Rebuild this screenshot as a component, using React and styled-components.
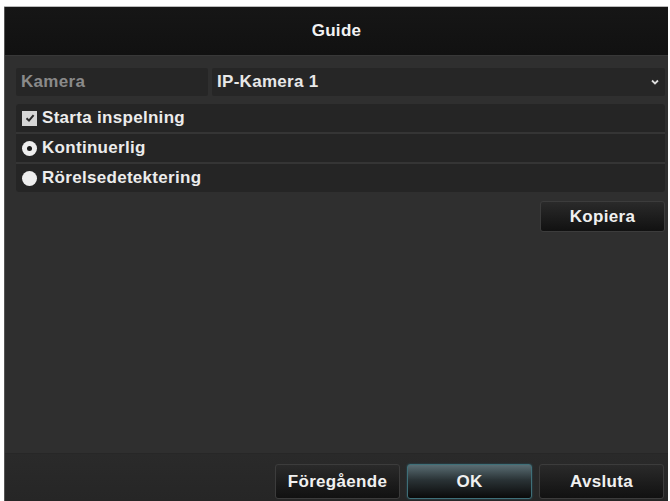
import React, { useState } from "react";
import styled, { createGlobalStyle } from "styled-components";

const GlobalStyle = createGlobalStyle`
  html, body {
    margin: 0;
    padding: 0;
    background: #ffffff;
    font-family: "Liberation Sans", Arial, sans-serif;
  }
  #root {
    height: 501px;
    overflow: hidden;
  }
`;

const Page = styled.div`
  padding: 7px 2px 0 4px;
  height: 501px;
  box-sizing: border-box;
`;

const Dialog = styled.div`
  height: 100%;
  display: flex;
  flex-direction: column;
  background: #2f2f2f;
  border-left: 1px solid #555;
  box-shadow: 0 -1px 0 #bbb;
`;

const TitleBar = styled.div`
  height: 48px;
  flex-shrink: 0;
  display: flex;
  align-items: center;
  justify-content: center;
  background: linear-gradient(#161616, #111111);
  color: #f2f2f2;
  font-weight: bold;
  font-size: 17px;
  letter-spacing: 0.3px;
  border-bottom: 1px solid #383838;
`;

const Body = styled.div`
  flex: 1;
  display: flex;
  flex-direction: column;
  padding: 12px 3px 0 11px;
`;

const FieldRow = styled.div`
  display: flex;
  gap: 4px;
  height: 28px;
`;

const Cell = styled.div`
  display: flex;
  align-items: center;
  background: #262626;
  border-radius: 2px;
  padding: 0 5px;
  font-size: 17px;
  font-weight: bold;
  letter-spacing: 0.3px;
  color: ${({ muted }) => (muted ? "#8a8a8a" : "#e8e8e8")};
  width: ${({ w }) => (w ? `${w}px` : "auto")};
  flex: ${({ w }) => (w ? "none" : 1)};
  box-sizing: border-box;
`;

const Caret = styled.svg`
  margin-left: auto;
  margin-right: 1px;
`;

const OptionGroup = styled.div`
  margin-top: 8px;
  display: flex;
  flex-direction: column;
  border-radius: 3px;
  overflow: hidden;
  background: #353535;
  gap: 2px;
`;

const OptionRow = styled.div`
  display: flex;
  align-items: center;
  gap: 5px;
  height: 28px;
  padding: 0 5px 0 6px;
  background: #252525;
  color: #ececec;
  font-size: 17px;
  font-weight: bold;
  letter-spacing: 0.3px;
`;

const Box = styled.span`
  width: 15px;
  height: 15px;
  background: #d6d6d6;
  display: flex;
  align-items: center;
  justify-content: center;
  flex-shrink: 0;
`;

const Radio = styled.span`
  width: 15px;
  height: 15px;
  border-radius: 50%;
  background: #eeeeee;
  display: flex;
  align-items: center;
  justify-content: center;
  flex-shrink: 0;
  &::after {
    content: "";
    width: 5px;
    height: 5px;
    border-radius: 50%;
    background: ${({ on }) => (on ? "#1b1b1b" : "transparent")};
  }
`;

const CopyRow = styled.div`
  display: flex;
  justify-content: flex-end;
  margin-top: 9px;
`;

const Button = styled.button`
  width: 125px;
  height: ${({ tall }) => (tall ? 35 : 31)}px;
  border-radius: 3px;
  border: 1px solid ${({ primary }) => (primary ? "#3f6f78" : "#3c3c3c")};
  background: ${({ primary }) =>
    primary
      ? "linear-gradient(#5a6d73 0%, #2a3336 45%, #0a0a0a 100%)"
      : "linear-gradient(#2a2a2a, #111111)"};
  color: #f0f0f0;
  font-family: "Liberation Sans", Arial, sans-serif;
  font-weight: bold;
  font-size: 17px;
  letter-spacing: 0.3px;
  cursor: pointer;
  box-shadow: ${({ primary }) => (primary ? "0 0 2px #2d5a66" : "none")};
`;

const Footer = styled.div`
  flex-shrink: 0;
  height: 48px;
  box-sizing: border-box;
  display: flex;
  align-items: flex-start;
  justify-content: flex-end;
  gap: 7px;
  padding: 10px 4px 0 0;
  background: linear-gradient(#2a2a2a, #262626);
  border-top: 1px solid #272727;
`;

const Spacer = styled.div`
  flex: 1;
`;

export default function App() {
  const [record, setRecord] = useState(true);
  const [mode, setMode] = useState("cont");

  return (
    <>
      <GlobalStyle />
      <Page>
        <Dialog>
          <TitleBar>Guide</TitleBar>
          <Body>
            <FieldRow>
              <Cell muted w={192}>Kamera</Cell>
              <Cell>
                IP-Kamera 1
                <Caret width="8" height="6" viewBox="0 0 8 6">
                  <path d="M1 1.5 L4 4.5 L7 1.5" stroke="#dddddd" strokeWidth="1.8" fill="none" />
                </Caret>
              </Cell>
            </FieldRow>
            <OptionGroup>
              <OptionRow onClick={() => setRecord(!record)}>
                <Box>
                  {record && (
                    <svg width="10" height="10" viewBox="0 0 10 10">
                      <path d="M1.5 5.2 L4 7.6 L8.6 2.2" stroke="#2a2a2a" strokeWidth="2" fill="none" />
                    </svg>
                  )}
                </Box>
                Starta inspelning
              </OptionRow>
              <OptionRow onClick={() => setMode("cont")}>
                <Radio on={mode === "cont"} />
                Kontinuerlig
              </OptionRow>
              <OptionRow onClick={() => setMode("motion")}>
                <Radio on={mode === "motion"} />
                Rörelsedetektering
              </OptionRow>
            </OptionGroup>
            <CopyRow>
              <Button>Kopiera</Button>
            </CopyRow>
            <Spacer />
          </Body>
          <Footer>
            <Button tall>Föregående</Button>
            <Button tall primary>OK</Button>
            <Button tall>Avsluta</Button>
          </Footer>
        </Dialog>
      </Page>
    </>
  );
}
